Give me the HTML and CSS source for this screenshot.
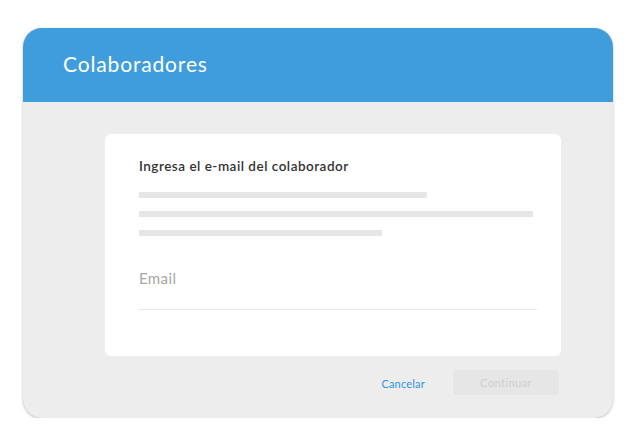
FILE: index.html
```html
<!DOCTYPE html>
<html lang="es">
<head>
<meta charset="utf-8">
<title>Colaboradores</title>
<link rel="stylesheet" href="styles.css">
</head>
<body>
<div class="page">
  <div class="window">
    <header class="header">
      <h1 class="title">Colaboradores</h1>
    </header>
    <main class="content">
      <section class="card">
        <h2 class="heading">Ingresa el e-mail del colaborador</h2>
        <div class="skeleton">
          <div class="bar bar-1"></div>
          <div class="bar bar-2"></div>
          <div class="bar bar-3"></div>
        </div>
        <div class="field">
          <span class="placeholder">Email</span>
        </div>
      </section>
      <div class="actions">
        <button class="btn-link" type="button">Cancelar</button>
        <button class="btn-disabled" type="button">Continuar</button>
      </div>
    </main>
  </div>
</div>
</body>
</html>
```
FILE: styles.css
```css
* { box-sizing: border-box; }
html, body { margin: 0; padding: 0; background: #ffffff; }
body { font-family: "Lato", "Open Sans", sans-serif; }

.page {
  padding: 28px 0 0 23px;
}

.window {
  width: 590px;
  height: 390px;
  border-radius: 19px;
  overflow: hidden;
  background: #ededed;
  box-shadow: 0 1px 3px rgba(0, 0, 0, 0.22), 0 0 1px rgba(0, 0, 0, 0.15);
  display: flex;
  flex-direction: column;
}

.header {
  height: 74px;
  background: #409ddc;
  display: flex;
  align-items: center;
  padding: 0 0 3px 40px;
}

.title {
  margin: 0;
  color: #ffffff;
  font-size: 21px;
  font-weight: 400;
  letter-spacing: 0.85px;
}

.content {
  padding: 32px 0 0 82px;
  display: flex;
  flex-direction: column;
}

.card {
  width: 456px;
  height: 222px;
  background: #ffffff;
  border-radius: 6px;
  padding: 24px 0 0 34px;
  display: flex;
  flex-direction: column;
}

.heading {
  margin: 0;
  font-size: 13.5px;
  line-height: 16px;
  font-weight: 600;
  color: #333333;
  letter-spacing: 0.5px;
}

.skeleton {
  margin-top: 18px;
  display: flex;
  flex-direction: column;
  gap: 13px;
}

.bar {
  height: 6px;
  background: #e6e6e6;
}
.bar-1 { width: 288px; }
.bar-2 { width: 394px; }
.bar-3 { width: 243px; }

.field {
  margin-top: 32px;
  width: 398px;
  padding-bottom: 21px;
  border-bottom: 1px solid #e8e8e8;
}

.placeholder {
  display: block;
  font-size: 15px;
  line-height: 20px;
  color: #a6a6a6;
  letter-spacing: 0.4px;
}

.actions {
  width: 454px;
  margin-top: 14px;
  display: flex;
  justify-content: flex-end;
  align-items: center;
  gap: 28px;
}

.btn-link {
  border: 0;
  background: none;
  padding: 0;
  font-family: inherit;
  font-size: 11px;
  color: #2e93e6;
  margin-top: 1px;
  letter-spacing: 0.2px;
}

.btn-disabled {
  width: 106px;
  height: 25px;
  border: 0;
  border-radius: 4px;
  background: #e6e6e6;
  color: #cfcfcf;
  font-family: inherit;
  font-size: 11.5px;
  padding: 0;
  letter-spacing: 0.2px;
}
```
